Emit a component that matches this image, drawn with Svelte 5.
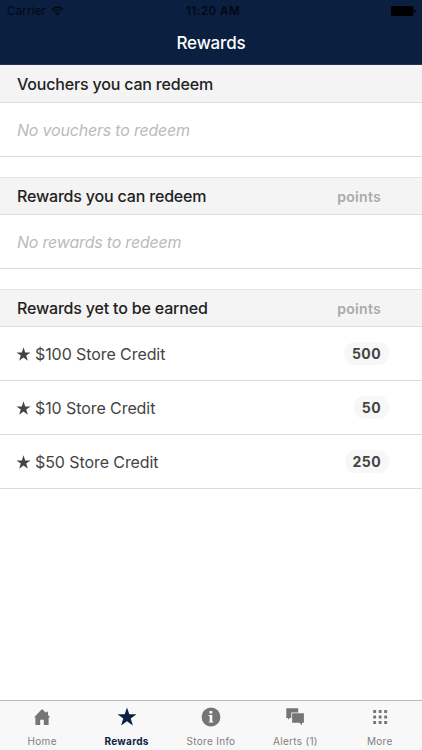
<script>
  const STAR = 'M10 0.5 L12.3 7.3 L19.5 7.3 L13.7 11.6 L15.9 18.5 L10 14.3 L4.1 18.5 L6.3 11.6 L0.5 7.3 L7.7 7.3 Z'

  const sections = [
    { title: 'Vouchers you can redeem', empty: 'No vouchers to redeem', items: [] },
    { title: 'Rewards you can redeem', points: true, empty: 'No rewards to redeem', items: [] },
    {
      title: 'Rewards yet to be earned',
      points: true,
      items: [
        { name: '$100 Store Credit', cost: 500 },
        { name: '$10 Store Credit', cost: 50 },
        { name: '$50 Store Credit', cost: 250 }
      ]
    }
  ]

  const tabs = [
    { id: 'home', label: 'Home' },
    { id: 'rewards', label: 'Rewards' },
    { id: 'info', label: 'Store Info' },
    { id: 'alerts', label: 'Alerts (1)' },
    { id: 'more', label: 'More' }
  ]

  let activeTab = $state('rewards')
</script>

<div class="app">
  <header>
    <div class="status">
      <div class="carrier">
        <span>Carrier</span>
        <svg class="wifi" width="13" height="10" viewBox="0 0 13 10">
          <path d="M0.8 3.6 A8.4 8.4 0 0 1 12.2 3.6 M2.9 5.8 A5.2 5.2 0 0 1 10.1 5.8" />
          <path class="dot" d="M6.5 9.6 L4.4 7.5 A3 3 0 0 1 8.6 7.5 Z" />
        </svg>
      </div>
      <span class="time">11:20 AM</span>
      <svg class="battery" width="26" height="10" viewBox="0 0 26 10">
        <rect width="22.5" height="10" rx="1.8" />
        <path d="M23.3 3.2 Q24.8 3.5 24.8 5 Q24.8 6.5 23.3 6.8 Z" />
      </svg>
    </div>
    <h1>Rewards</h1>
  </header>

  <main>
    {#each sections as section}
      <section>
        <div class="head">
          <h2>{section.title}</h2>
          {#if section.points}
            <span class="points">points</span>
          {/if}
        </div>
        {#each section.items as item}
          <div class="row">
            <svg class="star" width="15" height="14" viewBox="0 0 20 19"><path d={STAR} /></svg>
            <span class="name">{item.name}</span>
            <span class="badge">{item.cost}</span>
          </div>
        {:else}
          <div class="row empty">{section.empty}</div>
        {/each}
      </section>
    {/each}
  </main>

  <nav>
    {#each tabs as tab}
      <button class:active={activeTab === tab.id} onclick={() => (activeTab = tab.id)}>
        <svg width="20" height="20" viewBox="0 0 20 20">
          {#if tab.id === 'home'}
            <path d="M10 2 L14.2 6 V4.8 H16 V7.8 L18 10.6 H16.6 V18 H11.8 V12.8 H8.2 V18 H3.4 V10.6 H2 Z" />
          {:else if tab.id === 'rewards'}
            <path d={STAR} />
          {:else if tab.id === 'info'}
            <circle cx="10" cy="10" r="9.4" />
            <path class="cut" d="M8.5 4 H11.3 V6.4 H8.5 Z M7.7 8 H11.3 V14.4 H12.3 V15.6 H7.7 V14.4 H8.7 V9.2 H7.7 Z" />
          {:else if tab.id === 'alerts'}
            <path d="M1.3 1.2 H13.2 V5.4 H6.3 V11 H4.7 L3 12.8 V11 H1.3 Z" />
            <path d="M7.1 6.3 H18.9 V15.8 H17 V18.2 L14.4 15.8 H7.1 Z" />
          {:else}
            {#each [3.1, 8.6, 14.1] as y}
              {#each [3.2, 8.7, 14.2] as x}
                <rect {x} {y} width="2.9" height="2.9" rx="0.5" />
              {/each}
            {/each}
          {/if}
        </svg>
        <span>{tab.label}</span>
      </button>
    {/each}
  </nav>
</div>

<style>
  :global(body) {
    margin: 0;
    background: #fff;
  }

  .app {
    display: flex;
    flex-direction: column;
    height: 100vh;
    overflow: hidden;
    font-family: Inter, "Liberation Sans", sans-serif;
    color: #222;
  }

  header {
    box-sizing: border-box;
    height: 65px;
    background: #0b1f40;
    border-bottom: 1px solid #25344f;
  }

  .status {
    display: grid;
    grid-template-columns: 1fr auto 1fr;
    align-items: center;
    height: 22px;
    padding: 0 5px 0 7px;
    font-size: 11.5px;
    color: #020813;
  }

  .carrier {
    display: flex;
    align-items: center;
    gap: 5px;
    letter-spacing: 0.2px;
  }

  .wifi path {
    fill: none;
    stroke: #020813;
    stroke-width: 1.5;
  }

  .wifi .dot {
    fill: #020813;
    stroke: none;
  }

  .time {
    padding-left: 2px;
    font-weight: 600;
    letter-spacing: 0.5px;
  }

  .battery {
    justify-self: end;
    fill: #000;
  }

  h1 {
    margin: 0;
    font-size: 17px;
    font-weight: 500;
    letter-spacing: -0.15px;
    line-height: 43px;
    text-align: center;
    color: #fff;
  }

  main {
    flex: 1;
  }

  section {
    margin-bottom: 20px;
  }

  .head {
    box-sizing: border-box;
    display: flex;
    align-items: center;
    justify-content: space-between;
    height: 38px;
    padding: 0 41px 0 17px;
    background: #f4f4f4;
    border-top: 1px solid #e4e4e4;
    border-bottom: 1px solid #dedede;
  }

  section:first-child .head {
    border-top-color: #f4f4f4;
  }

  h2 {
    margin: 0;
    font-size: 16px;
    font-weight: 500;
    letter-spacing: -0.18px;
  }

  .points {
    font-size: 14px;
    font-weight: 600;
    letter-spacing: 0.3px;
    color: #aaa;
  }

  .row {
    box-sizing: border-box;
    display: flex;
    align-items: center;
    height: 54px;
    padding: 0 33px 0 17px;
    border-bottom: 1px solid #dcdcdc;
    font-size: 16px;
    letter-spacing: -0.08px;
    color: #444;
  }

  .empty {
    font-style: italic;
    letter-spacing: -0.2px;
    color: #bbb;
  }

  .star {
    margin: 0 4px 0 -1px;
    fill: #444;
  }

  .name {
    flex: 1;
  }

  .badge {
    padding: 1px 8px 0;
    border-radius: 11px;
    background: #f7f7f7;
    font-size: 14px;
    font-weight: 700;
    line-height: 22px;
    letter-spacing: 0.4px;
  }

  nav {
    box-sizing: border-box;
    display: grid;
    grid-template-columns: repeat(5, 1fr);
    height: 50px;
    border-top: 1px solid #b9b9b9;
    background: #f8f8f8;
  }

  button {
    display: flex;
    flex-direction: column;
    align-items: center;
    gap: 7px;
    padding: 6px 0 0;
    border: 0;
    background: none;
    font: 400 10px/14px Inter, "Liberation Sans", sans-serif;
    letter-spacing: 0.3px;
    color: #808080;
  }

  button svg {
    fill: #757575;
  }

  .cut {
    fill: #f8f8f8;
  }

  button.active {
    font-weight: 700;
    color: #0b1f40;
  }

  button.active svg {
    fill: #0b1f40;
  }
</style>
